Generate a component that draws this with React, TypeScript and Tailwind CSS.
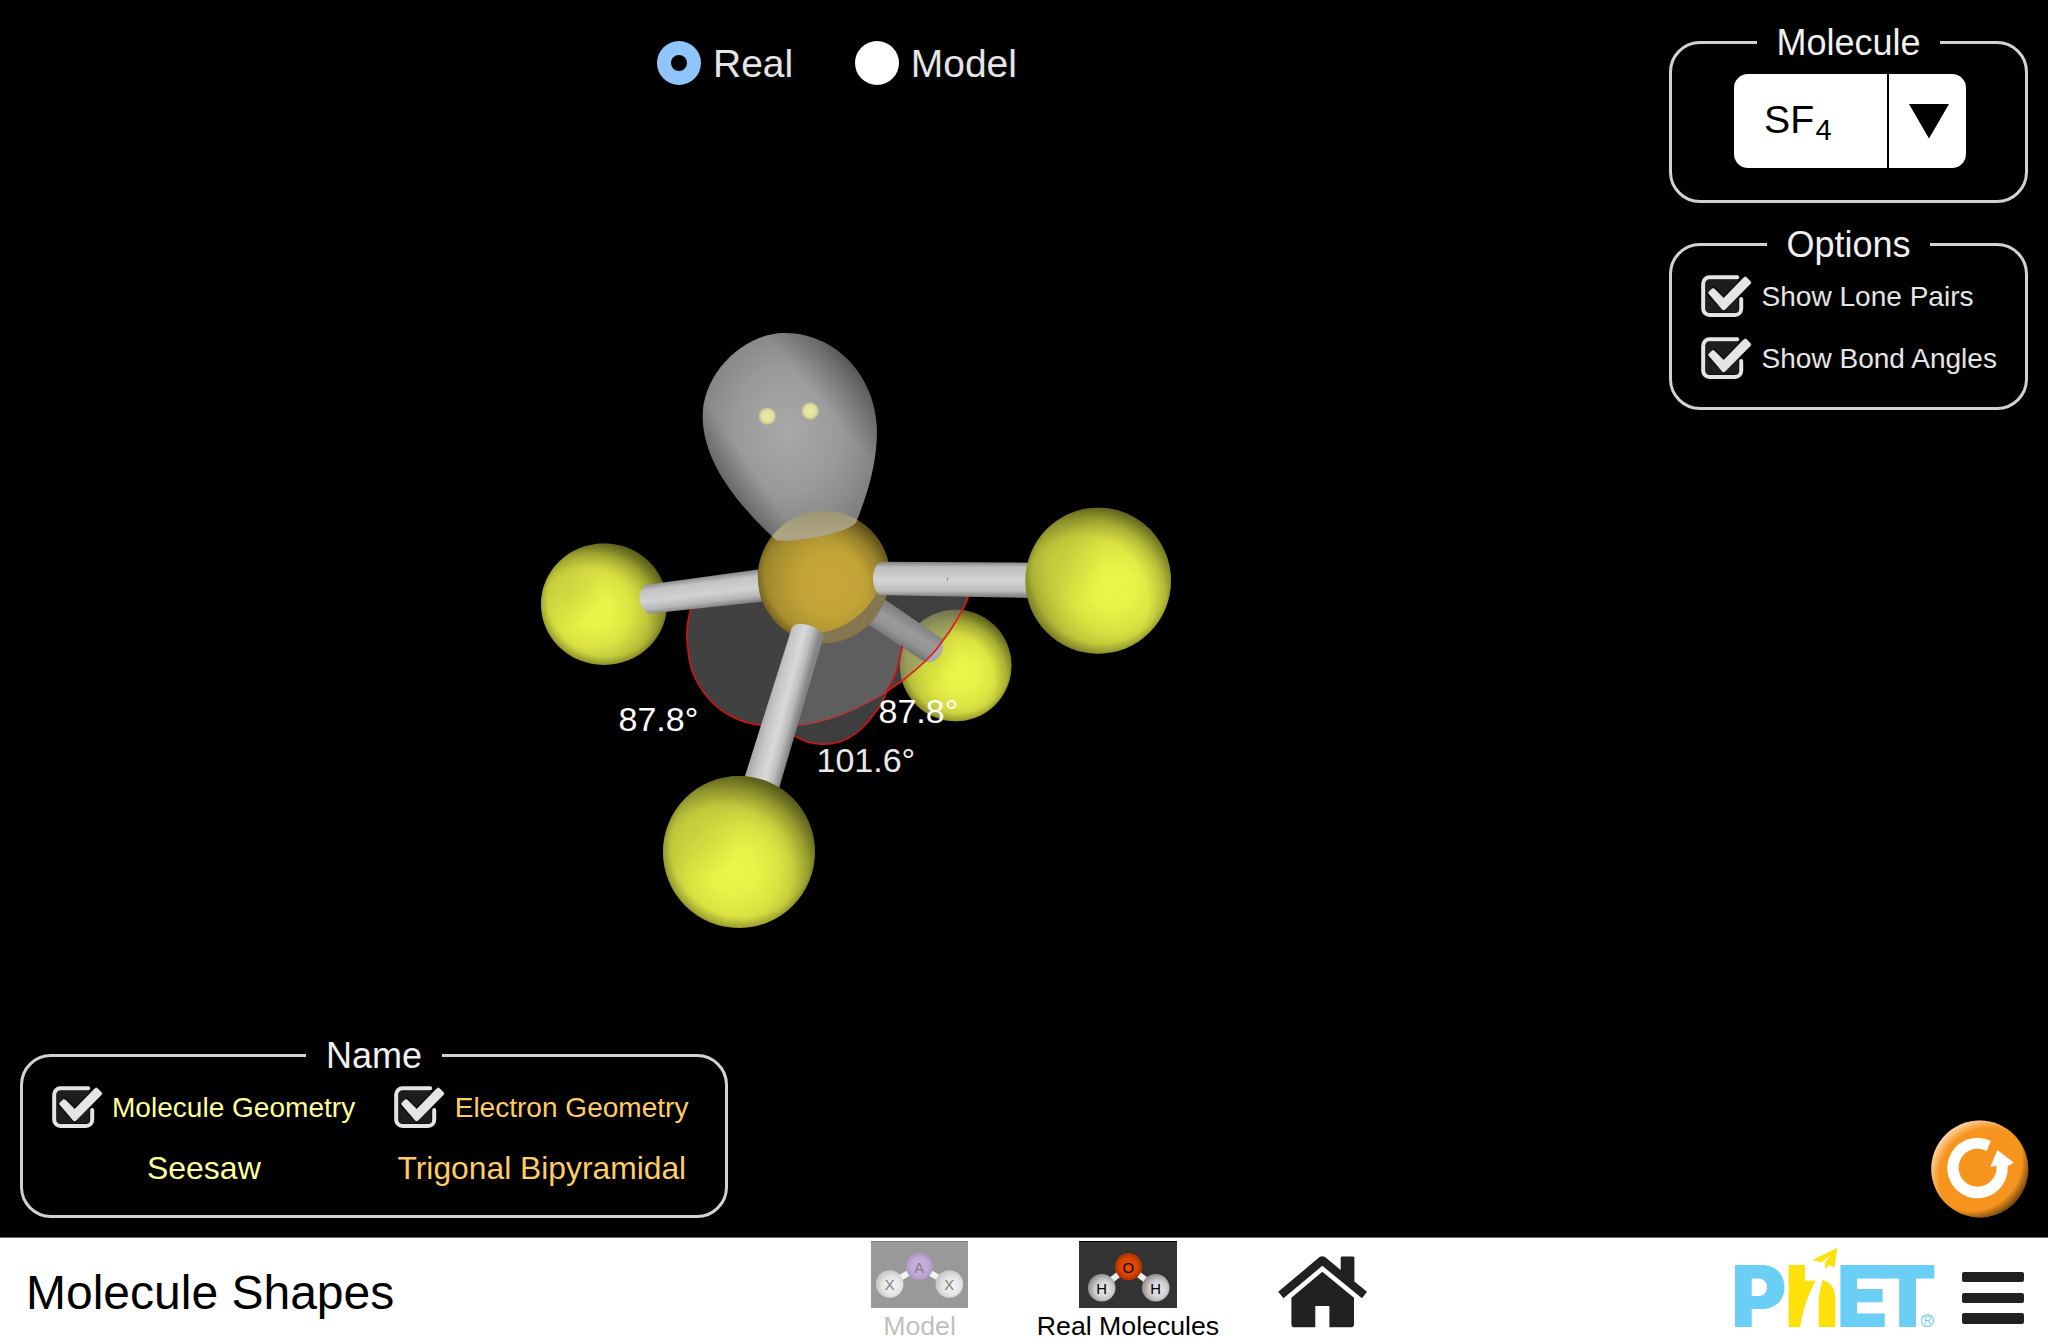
import React from "react";

function Checkbox() {
  return (
    <svg width="50" height="43" viewBox="0 0 50 43" className="relative top-px -left-px block shrink-0 overflow-visible">
      <rect x="4.5" y="4.5" width="33" height="33" rx="2" fill="#1d1d1d" />
      <path
        d="M36.2 2.2H8.5A6.3 6.3 0 0 0 2.2 8.5V33.7A6.3 6.3 0 0 0 8.5 40H34A6.3 6.3 0 0 0 40.2 33.7V24"
        fill="none"
        stroke="#e5e5e5"
        strokeWidth="4"
        strokeLinecap="round"
      />
      <path d="M9.3 15.2L22.7 28.8L48 3.6" fill="none" stroke="#000" strokeWidth="11" strokeLinejoin="miter" strokeLinecap="butt" />
      <path d="M7.7 18.4Q7.4 17.4 8.2 16.6L10.8 13.9Q12.2 13 13.5 14.1L22.7 23.2L42.9 2.6Q44.3 1.2 45.6 2.6L49.4 6.5Q50.3 7.5 49.4 8.7L24 34.4Q22.7 35.4 21.4 34.4Z" fill="#e5e5e5" stroke="#e5e5e5" strokeWidth="0.7" />
    </svg>
  );
}

function Panel({ title, titleClass, className, children }: { title: string; titleClass: string; className: string; children: React.ReactNode }) {
  return (
    <section className={"flex flex-col items-center rounded-[31px] border-[3px] border-[#d2d2d2] " + className}>
      <h2 className={"-mt-[21px] h-[39px] bg-black text-center text-[36px] leading-10 text-[#f0f0f0] " + titleClass}>{title}</h2>
      {children}
    </section>
  );
}

function CheckRow({ label, color }: { label: string; color: string }) {
  return (
    <label className={"flex h-[42px] items-start gap-[9.5px] text-[28.05px] leading-[46px] whitespace-nowrap " + color}>
      <Checkbox />
      {label}
    </label>
  );
}

function Atom({ id, cx, cy, rx, ry, hx, hy }: { id: string; cx: number; cy: number; rx: number; ry: number; hx: number; hy: number }) {
  return (
    <g>
      <defs>
        <radialGradient id={id} cx={hx} cy={hy} r="0.6">
          <stop offset="0" stopColor="#edf749" />
          <stop offset="0.25" stopColor="#e9f247" />
          <stop offset="0.5" stopColor="#dbe342" />
          <stop offset="0.72" stopColor="#bec53a" />
          <stop offset="0.88" stopColor="#a4a932" />
          <stop offset="1" stopColor="#989d2e" />
        </radialGradient>
      </defs>
      <ellipse cx={cx} cy={cy} rx={rx} ry={ry} fill={`url(#${id})`} />
      <ellipse cx={cx} cy={cy} rx={rx} ry={ry} fill="url(#sideLight)" />
      <ellipse cx={cx} cy={cy} rx={rx} ry={ry} fill="url(#topShade)" />
      <ellipse cx={cx} cy={cy} rx={rx} ry={ry} fill="url(#lowShade)" />
    </g>
  );
}

const LONE_PAIR =
  "M783 333C742 334 702 375 702.7 417C703 462 738 505 776.7 540.7C805 541.5 846 533 856 522.7C870 488 877 460 877 430C876 376 835 332 783 333Z";

function Molecule() {
  return (
    <svg width="2048" height="1238" viewBox="0 0 2048 1238" className="absolute inset-0">
      <defs>
        <radialGradient id="sideLight" cx="0.2" cy="0.36" r="0.34">
          <stop offset="0" stopColor="#c8cf3d" stopOpacity="0.75" />
          <stop offset="0.5" stopColor="#c8cf3d" stopOpacity="0.4" />
          <stop offset="1" stopColor="#c8cf3d" stopOpacity="0" />
        </radialGradient>
        <radialGradient id="topShade" cx="0.4" cy="0.64" r="0.74">
          <stop offset="0.6" stopColor="#000" stopOpacity="0" />
          <stop offset="0.76" stopColor="#000" stopOpacity="0.14" />
          <stop offset="0.9" stopColor="#000" stopOpacity="0.42" />
          <stop offset="1" stopColor="#000" stopOpacity="0.65" />
        </radialGradient>
        <radialGradient id="lowShade" cx="0.52" cy="0.46" r="0.57">
          <stop offset="0.82" stopColor="#000" stopOpacity="0" />
          <stop offset="0.93" stopColor="#000" stopOpacity="0.2" />
          <stop offset="1" stopColor="#000" stopOpacity="0.45" />
        </radialGradient>
        <radialGradient id="sulfur" cx="0.55" cy="0.55" r="0.6">
          <stop offset="0" stopColor="#c9a938" />
          <stop offset="0.4" stopColor="#c2a336" />
          <stop offset="0.7" stopColor="#ab912f" />
          <stop offset="0.92" stopColor="#957e28" />
          <stop offset="1" stopColor="#836e23" />
        </radialGradient>
        <radialGradient id="lone" gradientUnits="userSpaceOnUse" cx="788" cy="430" r="125" gradientTransform="translate(788 430) rotate(-8) scale(0.82 1) translate(-788 -430)">
          <stop offset="0" stopColor="#a9a9a9" />
          <stop offset="0.5" stopColor="#9a9a9a" />
          <stop offset="0.8" stopColor="#888888" />
          <stop offset="1" stopColor="#787878" />
        </radialGradient>
        <linearGradient id="loneDark" gradientUnits="userSpaceOnUse" x1="868" y1="350" x2="815" y2="395">
          <stop offset="0" stopColor="#000" stopOpacity="0.55" />
          <stop offset="0.5" stopColor="#000" stopOpacity="0.22" />
          <stop offset="1" stopColor="#000" stopOpacity="0" />
        </linearGradient>
        <linearGradient id="loneDarkLow" gradientUnits="userSpaceOnUse" x1="722" y1="500" x2="757" y2="476">
          <stop offset="0" stopColor="#000" stopOpacity="0.35" />
          <stop offset="1" stopColor="#000" stopOpacity="0" />
        </linearGradient>
        <linearGradient id="bondV" x1="0" y1="0" x2="0" y2="1">
          <stop offset="0" stopColor="#7e7e7e" />
          <stop offset="0.15" stopColor="#bcbcbc" />
          <stop offset="0.5" stopColor="#d4d4d4" />
          <stop offset="0.8" stopColor="#bdbdbd" />
          <stop offset="1" stopColor="#757575" />
        </linearGradient>
        <linearGradient id="bondLeft" gradientUnits="userSpaceOnUse" x1="700" y1="577" x2="704" y2="609">
          <stop offset="0" stopColor="#888888" />
          <stop offset="0.2" stopColor="#c4c4c4" />
          <stop offset="0.55" stopColor="#d2d2d2" />
          <stop offset="0.8" stopColor="#b5b5b5" />
          <stop offset="1" stopColor="#7a7a7a" />
        </linearGradient>
        <linearGradient id="bondFront" gradientUnits="userSpaceOnUse" x1="766" y1="700" x2="800" y2="709">
          <stop offset="0" stopColor="#a8a8a8" />
          <stop offset="0.25" stopColor="#c6c6c6" />
          <stop offset="0.55" stopColor="#d9d9d9" />
          <stop offset="0.78" stopColor="#bcbcbc" />
          <stop offset="1" stopColor="#858585" />
        </linearGradient>
        <linearGradient id="bondBack" gradientUnits="userSpaceOnUse" x1="914" y1="619" x2="898" y2="645">
          <stop offset="0" stopColor="#7e7e7e" />
          <stop offset="0.4" stopColor="#9a9a9a" />
          <stop offset="0.7" stopColor="#949494" />
          <stop offset="1" stopColor="#757575" />
        </linearGradient>
        <linearGradient id="overlap" x1="0" y1="0" x2="0" y2="1">
          <stop offset="0" stopColor="#9d9471" />
          <stop offset="0.5" stopColor="#aea584" />
          <stop offset="1" stopColor="#a49a78" />
        </linearGradient>
        <radialGradient id="electron">
          <stop offset="0" stopColor="#ebeba8" />
          <stop offset="0.7" stopColor="#e0e09f" />
          <stop offset="1" stopColor="#b9b98c" />
        </radialGradient>
        <clipPath id="lonePairClip">
          <path d={LONE_PAIR} />
        </clipPath>
        <clipPath id="sulfurFront">
          <path d="M740 490H905V560Q890 580 877 593.5Q868 609 853 620Q838 630 821.7 632.5L790 650H740Z" />
        </clipPath>
      </defs>

      <Atom id="atomLeft" cx={604} cy={604.2} rx={63} ry={60.8} hx={0.42} hy={0.55} />
      <Atom id="atomBack" cx={955.7} cy={665.5} rx={55.8} ry={55.8} hx={0.55} hy={0.57} />

      <path d="M824 577L902.3 645.3Q900.5 658 896.7 670Q893 681 886.7 691.7Q882 705 873.3 715Q868 723 860 730Q851 738 840 741.7Q831 744.5 821.7 744.3Q814 744 806.7 741.7Q800 739 794.3 736L780 720Z" fill="#7b7b7b" fillOpacity="0.5" />
      <path d="M876 595L888.7 602.3L942.7 639.3Q945 655 934 661Q928 663 921.7 660L865 622Z" fill="url(#bondBack)" />

      <path d="M824 577L691 607.3Q685 630 687.5 645Q688 657 691.7 670Q698 687 710 700Q720 711 733.3 717.3Q746 724 762 725.3L778 726Z" fill="#414141" />
      <path d="M824 577L969 594.3Q966 605 956.7 620Q951 630 943.3 640Q936 651 926.7 660Q915 671 903.3 680L886.7 691.7L866.7 702.7Q853 710 840 715Q826 720 813.3 722.7Q804 725 794.3 725.3L778 726Z" fill="#7d7d7d" fillOpacity="0.5" />
      <path d="M876 595L888.7 602.3L942.7 639.3L941.5 642.5Q935 651 926.7 660L923.5 661L865 622Z" fill="url(#bondBack)" />
      <path d="M942.7 640Q944.5 655 934 661Q929 662.5 925 661.3Z" fill="#acacae" />
      <path d="M821 631Q838 630 853 620Q868 609 877 593.5L889 582A66 66 0 0 1 824 643.2L816 642Z" fill="#84774f" />

      <g clipPath="url(#sulfurFront)">
        <circle cx="824" cy="577" r="66.2" fill="url(#sulfur)" />
        <circle cx="824" cy="577" r="66.2" fill="url(#topShade)" />
        <circle cx="824" cy="577" r="66.2" fill="url(#lowShade)" />
      </g>

      <path d="M691 607.3Q685 630 687.5 645Q688 657 691.7 670Q698 687 710 700Q720 711 733.3 717.3Q746 724 762 725.3" fill="none" stroke="#d9100f" strokeWidth="1.6" />
      <path d="M794.3 725.3Q804 725 813.3 722.7Q826 720 840 715Q853 710 866.7 702.7L886.7 691.7" fill="none" stroke="#b43b3b" strokeWidth="1.6" />
      <path d="M886.7 691.7L903.3 680Q915 671 926.7 660Q936 651 943.3 640Q951 630 956.7 620Q966 605 969 594.3" fill="none" stroke="#e31a12" strokeWidth="1.6" />
      <path d="M902.3 645.3Q900.5 658 896.7 670Q893 681 886.7 691.7Q882 705 873.3 715Q868 723 860 730Q851 738 840 741.7Q831 744.5 821.7 744.3Q814 744 806.7 741.7Q800 739 794.3 736" fill="none" stroke="#d9100f" strokeWidth="1.6" />

      <path d="M645 585L758 569.5Q757 586 762 601.7L648.3 613.7Q642 610 639.5 600Q639 591 645 585Z" fill="url(#bondLeft)" />
      <path d="M880 561.7L1034 562.7V598L879.3 595Q873 589 873 578Q873 567 880 561.7Z" fill="url(#bondV)" />
      <path d="M947.3 577.5V581" stroke="#8a8a8a" strokeWidth="1" />
      <path d="M791.7 628.3Q795 623.5 800 623.7Q816 624.5 824 635L777.7 793L741.5 787Z" fill="url(#bondFront)" />
      <Atom id="atomRight" cx={1098.2} cy={580.7} rx={72.8} ry={73} hx={0.6} hy={0.54} />
      <Atom id="atomFront" cx={739} cy={852} rx={76} ry={76} hx={0.47} hy={0.62} />

      <path d={LONE_PAIR} fill="url(#lone)" />
      <path d={LONE_PAIR} fill="url(#loneDark)" />
      <path d={LONE_PAIR} fill="url(#loneDarkLow)" />
      <g clipPath="url(#lonePairClip)">
        <path d="M760 560A66.2 66.2 0 0 1 888 560Z" fill="url(#overlap)" />
      </g>
      <circle cx="767.3" cy="416.2" r="8.7" fill="url(#electron)" />
      <circle cx="810.2" cy="411" r="8.7" fill="url(#electron)" />

      <g fontFamily="Liberation Sans, Arial, sans-serif" fontSize="34" fill="#ffffff" style={{ fontKerning: "none" }}>
        <text x="618.5" y="731.3">87.8°</text>
        <text x="878.5" y="722.7">87.8°</text>
        <text x="816.5" y="771.5" fill="#e8e8e8">101.6°</text>
      </g>
    </svg>
  );
}

function ResetButton() {
  return (
    <svg width="98" height="98" viewBox="1930 1120 98 98" className="mt-auto block self-end overflow-visible" role="button" aria-label="Reset All">
      <defs>
        <radialGradient id="resetHi" gradientUnits="userSpaceOnUse" cx="1989" cy="1178" r="64">
          <stop offset="0.78" stopColor="#fff" stopOpacity="0" />
          <stop offset="1" stopColor="#fff" stopOpacity="0.8" />
        </radialGradient>
        <radialGradient id="resetLo" gradientUnits="userSpaceOnUse" cx="1971" cy="1160" r="62">
          <stop offset="0.82" stopColor="#000" stopOpacity="0" />
          <stop offset="1" stopColor="#000" stopOpacity="0.6" />
        </radialGradient>
      </defs>
      <circle cx="1979.8" cy="1169" r="48.5" fill="#f7941e" />
      <circle cx="1979.8" cy="1169" r="48.5" fill="url(#resetHi)" />
      <circle cx="1979.8" cy="1169" r="48.5" fill="url(#resetLo)" />
      <path d="M2007.7 1166A30.3 30.3 0 1 1 1991 1140.9L1986.7 1151A19 19 0 1 0 1996.5 1165.8L1990.3 1167L1997.3 1150L2014 1162.7Z" fill="#fff" />
    </svg>
  );
}

function Thumb({
  w, bg, center, side, centerText, sideText, cx, ly, lx, rx, textColor, edge, id,
}: {
  w: number; bg: string; center: [string, string, string]; side: [string, string, string]; centerText: string; sideText: string;
  cx: number; ly: number; lx: number; rx: number; textColor: string; edge: string; id: string;
}) {
  return (
    <svg width={w} height="67" viewBox={`0 0 ${w} 67`} className="block">
      <defs>
        <radialGradient id={id + "c"} cx="0.5" cy="0.5" r="0.52">
          <stop offset="0" stopColor={center[0]} />
          <stop offset="0.6" stopColor={center[1]} />
          <stop offset="1" stopColor={center[2]} />
        </radialGradient>
        <radialGradient id={id + "s"} cx="0.58" cy="0.56" r="0.58">
          <stop offset="0" stopColor={side[0]} />
          <stop offset="0.55" stopColor={side[1]} />
          <stop offset="1" stopColor={side[2]} />
        </radialGradient>
      </defs>
      <rect width={w} height="67" fill={bg} />
      <rect width={w} height="1" fill={edge} />
      <path d={`M${lx} ${ly}L${cx} 25.7L${rx} ${ly}`} fill="none" stroke={side[0]} strokeWidth="6" />
      <circle cx={lx} cy={ly} r="13.8" fill={`url(#${id}s)`} />
      <circle cx={rx} cy={ly} r="13.8" fill={`url(#${id}s)`} />
      <circle cx={cx} cy="25.7" r="13.6" fill={`url(#${id}c)`} />
      <g fontFamily="Liberation Sans, Arial, sans-serif" fontSize="14.8" textAnchor="middle" fill={textColor}>
        <text x={cx - 0.3} y="32">{centerText}</text>
        <text x={lx} y={ly + 6}>{sideText}</text>
        <text x={rx} y={ly + 6}>{sideText}</text>
      </g>
    </svg>
  );
}

function HomeIcon() {
  return (
    <svg width="90" height="72" viewBox="1278 1255.5 90 72" className="block" fill="#212121">
      <path d="M1319.5 1256.6Q1322.3 1254.8 1325 1256.6L1340.7 1269.5V1257.2Q1340.7 1256 1342 1256H1353Q1354.4 1256 1354.4 1257.2V1281L1367 1291.3L1362 1297.8L1322.3 1265.3L1283.5 1297.8L1278.2 1291.3Z" />
      <path d="M1322.3 1271.2L1354 1297.2V1323.7Q1354 1326.8 1351 1326.8H1329.4V1305.6H1315.3V1326.8H1294.4Q1291.4 1326.8 1291.4 1323.7V1297.2Z" />
    </svg>
  );
}

function PhetLogo() {
  return (
    <svg width="210" height="106" viewBox="1729 1238 210 106" className="block overflow-visible">
      <text y="1327.3" fontFamily="Inter, Liberation Sans, sans-serif" fontWeight="900" fontSize="84.7" fill="#6acef5">
        <tspan x="1731">P</tspan>
        <tspan x="1784.5" fill="#fee108">h</tspan>
        <tspan x="1836.5">E</tspan>
        <tspan x="1878.5">T</tspan>
      </text>
      <path d="M1802 1280.5H1815.7Q1803 1305 1800 1327.3H1795V1290Z" fill="#fee108" />
      <path d="M1815.7 1280.5Q1803 1305 1800 1327.8H1819Q1815.5 1306 1822 1281.5L1823.5 1277L1820 1272H1806V1280.5Z" fill="#fff" />
      <path d="M1812.3 1260L1837.3 1247.8L1834.5 1267.5L1829 1265L1825.5 1269L1824.7 1263.5L1831 1255L1821.5 1262.5Z" fill="#fee108" />
      <circle cx="1927.5" cy="1320.5" r="6" fill="none" stroke="#6acef5" strokeWidth="1.1" />
      <text x="1927.7" y="1324.1" fontFamily="Liberation Sans, Arial, sans-serif" fontSize="10" textAnchor="middle" fill="#6acef5">R</text>
    </svg>
  );
}

export default function App() {
  return (
    <div className="flex h-[1344px] w-[2048px] flex-col overflow-hidden bg-black font-['Liberation_Sans',Arial,sans-serif]">
      <main className="relative flex h-[1237px] justify-between">
        <Molecule />

        <div className="relative flex flex-col justify-between pt-[41px] pb-[19px] pl-[20px]">
          <div className="flex gap-[62px] pl-[637px] text-[39px] leading-[46px] text-[#e5e5e5]">
            <label className="flex gap-[12px]">
              <span className="flex size-11 items-center justify-center rounded-full bg-[#8fc5fb]">
                <span className="size-4 rounded-full bg-black" />
              </span>
              Real
            </label>
            <label className="flex gap-[11.5px]">
              <span className="size-11 rounded-full bg-white" />
              Model
            </label>
          </div>

          <Panel title="Name" titleClass="w-[136px]" className="h-[164px] w-[708px]">
            <div className="mt-[10px] mr-[7px] flex gap-[40px]">
              <div className="flex flex-col items-center gap-5">
                <CheckRow label="Molecule Geometry" color="text-[#ffff99]" />
                <span className="text-[32px] leading-[42px] text-[#ffff99]">Seesaw</span>
              </div>
              <div className="flex flex-col items-center gap-5">
                <CheckRow label="Electron Geometry" color="text-[#ffcc66]" />
                <span className="text-[31.8px] leading-[42px] text-[#ffcc66]">Trigonal Bipyramidal</span>
              </div>
            </div>
          </Panel>
        </div>

        <div className="relative mr-5 flex w-[359px] flex-col pt-[41px] pb-[19px]">
          <Panel title="Molecule" titleClass="w-[183px]" className="h-[162px]">
            <button className="mt-3 ml-[3px] flex h-[94px] w-[232px] rounded-[14px] bg-white text-black">
              <span className="flex h-full w-[155px] border-r-2 border-black pl-[30px] text-[39.2px] leading-[91px]">
                SF
                <span className="mt-[11px] ml-[1.5px] text-[29px]">4</span>
              </span>
              <span className="flex flex-1 items-start justify-center pt-[30px] pl-0.5">
                <svg width="40" height="35" viewBox="0 0 40 35">
                  <path d="M0 0H40L20 34.5Z" />
                </svg>
              </span>
            </button>
          </Panel>

          <Panel title="Options" titleClass="w-[163px]" className="mt-[40px] h-[167px]">
            <div className="mt-[10px] flex flex-col gap-5 self-start pl-[30px]">
              <CheckRow label="Show Lone Pairs" color="text-[#e5e5e5]" />
              <CheckRow label="Show Bond Angles" color="text-[#e5e5e5]" />
            </div>
          </Panel>

          <ResetButton />
        </div>
      </main>

      <nav className="flex h-[107px] items-start border-t border-[#666666] bg-white pt-[3px] pl-[26px] text-[26.7px] leading-8">
        <h1 className="w-[845px] pt-[24px] text-[48px] leading-[56px] text-black">Molecule Shapes</h1>
        <div className="flex w-[97px] flex-col items-center gap-[2px] text-[#bfbfbf]">
          <Thumb id="m" w={97} bg="#999999" edge="#808080" center={["#c6aede", "#c2aadc", "#a997bb"]} side={["#f4f4f4", "#e6e6e6", "#c6c6c6"]} centerText="A" sideText="X" cx={48.4} lx={18.7} rx={78.3} ly={43} textColor="#7d7d7d" />
          Model
        </div>
        <div className="ml-[68px] flex w-[184px] flex-col items-center gap-[2px] whitespace-nowrap text-black">
          <Thumb id="r" w={98} bg="#333333" edge="#000000" center={["#f04a00", "#dd4400", "#9c3000"]} side={["#ededed", "#cfcfcf", "#8d8d8d"]} centerText="O" sideText="H" cx={49.5} lx={22.7} rx={76.7} ly={46.7} textColor="#000000" />
          Real Molecules
        </div>
        <div className="ml-[58px] pt-[14.5px]">
          <HomeIcon />
        </div>
        <div className="-mt-[3px] ml-[361px]">
          <PhetLogo />
        </div>
        <div className="ml-[23px] flex flex-col gap-[10.2px] pt-[31px]">
          <span className="h-[10.4px] w-[62px] rounded-[2px] bg-[#212121]" />
          <span className="h-[10.4px] w-[62px] rounded-[2px] bg-[#212121]" />
          <span className="h-[10.4px] w-[62px] rounded-[2px] bg-[#212121]" />
        </div>
      </nav>
    </div>
  );
}
